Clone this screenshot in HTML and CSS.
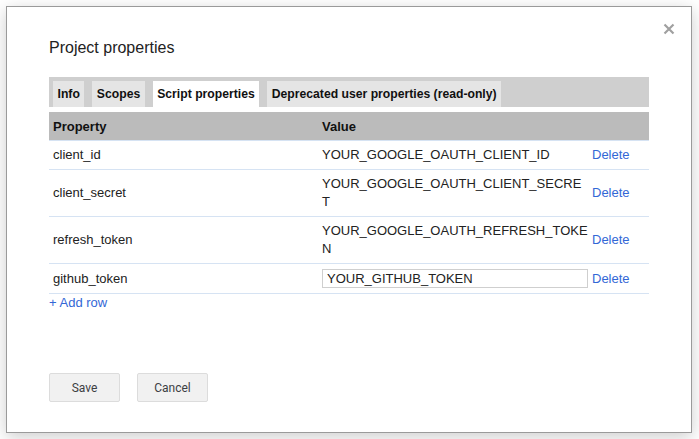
FILE: index.html
```html
<!DOCTYPE html>
<html>
<head>
<meta charset="utf-8">
<link rel="stylesheet" href="styles.css">
</head>
<body>
<div class="dialog">
  <svg class="close" width="12" height="12" viewBox="0 0 12 12"><path d="M1.5 1.5L10.5 10.5M10.5 1.5L1.5 10.5" stroke="#a0a0a0" stroke-width="2.2" fill="none"/></svg>
  <h1 class="title">Project properties</h1>
  <div class="tabbar">
    <div class="tab">Info</div>
    <div class="tab">Scopes</div>
    <div class="tab active">Script properties</div>
    <div class="tab">Deprecated user properties (read-only)</div>
  </div>
  <table class="props">
    <colgroup><col class="c1"><col class="c2"><col class="c3"></colgroup>
    <thead>
      <tr><th>Property</th><th>Value</th><th></th></tr>
    </thead>
    <tbody>
      <tr><td>client_id</td><td class="val">YOUR_GOOGLE_OAUTH_CLIENT_ID</td><td><a class="link">Delete</a></td></tr>
      <tr><td>client_secret</td><td class="val">YOUR_GOOGLE_OAUTH_CLIENT_SECRET</td><td><a class="link">Delete</a></td></tr>
      <tr><td>refresh_token</td><td class="val">YOUR_GOOGLE_OAUTH_REFRESH_TOKEN</td><td><a class="link">Delete</a></td></tr>
      <tr><td>github_token</td><td class="val"><input class="inp" type="text" value="YOUR_GITHUB_TOKEN"></td><td><a class="link">Delete</a></td></tr>
    </tbody>
  </table>
  <div class="addrow"><a class="link">+ Add row</a></div>
  <div class="buttons">
    <button class="btn">Save</button>
    <button class="btn">Cancel</button>
  </div>
</div>
</body>
</html>
```
FILE: styles.css
```css
html, body { margin: 0; padding: 0; background: #fff; }
body { font-family: "Liberation Sans", Arial, sans-serif; color: #222; }
.dialog {
  position: relative;
  box-sizing: border-box;
  width: 686px;
  height: 427px;
  margin: 6px;
  padding: 31px 42px 0;
  border: 1px solid #9a9a9a;
  background: #fff;
  box-shadow: 0 4px 16px rgba(0,0,0,0.2);
}
.close { position: absolute; left: 656px; top: 16px; }
.title { margin: 0 0 19px; font-size: 16px; line-height: 20px; font-weight: normal; color: #222; }
.tabbar {
  display: flex; gap: 8px;
  padding: 4px 4px 0;
  height: 30px; box-sizing: border-box;
  background: #cfcfcf;
}
.tab {
  height: 26px; line-height: 26px;
  padding: 0 4.5px;
  background: #e5e5e5;
  font-size: 12.2px; font-weight: bold; color: #111;
}
.tab.active { background: #fff; }
.props {
  margin-top: 5px;
  width: 600px;
  table-layout: fixed;
  border-collapse: separate;
  border-spacing: 0;
  font-size: 13px;
}
.c1 { width: 269px; }
.c2 { width: 270px; }
.c3 { width: 61px; }
.props th {
  height: 28px; padding: 0 4px;
  background: #bbbbbb;
  text-align: left; font-weight: bold; color: #111;
  border-bottom: 1px solid #d6e3f3;
}
.props td {
  padding: 5px 4px;
  line-height: 18px;
  vertical-align: middle;
  border-bottom: 1px solid #d6e3f3;
  color: #222;
}
.props td.val { vertical-align: top; word-break: break-all; padding-right: 0; }
.inp {
  display: block; box-sizing: border-box;
  width: 100%; height: 19px; margin: 0;
  padding: 0 4px;
  border: 1px solid #cfcfcf;
  font: 13px "Liberation Sans", Arial, sans-serif; color: #222;
  outline: none;
}
.link { color: #3367d6; text-decoration: none; cursor: pointer; }
.addrow { margin-top: 1px; font-size: 13px; line-height: 15px; }
.buttons { display: flex; gap: 17px; margin-top: 63px; }
.btn {
  width: 71px; height: 29px; box-sizing: border-box;
  background: #f1f1f1;
  border: 1px solid #dcdcdc; border-radius: 2px;
  font-family: Roboto, sans-serif; font-size: 12px; color: #3c4043;
  padding: 0;
}
```
